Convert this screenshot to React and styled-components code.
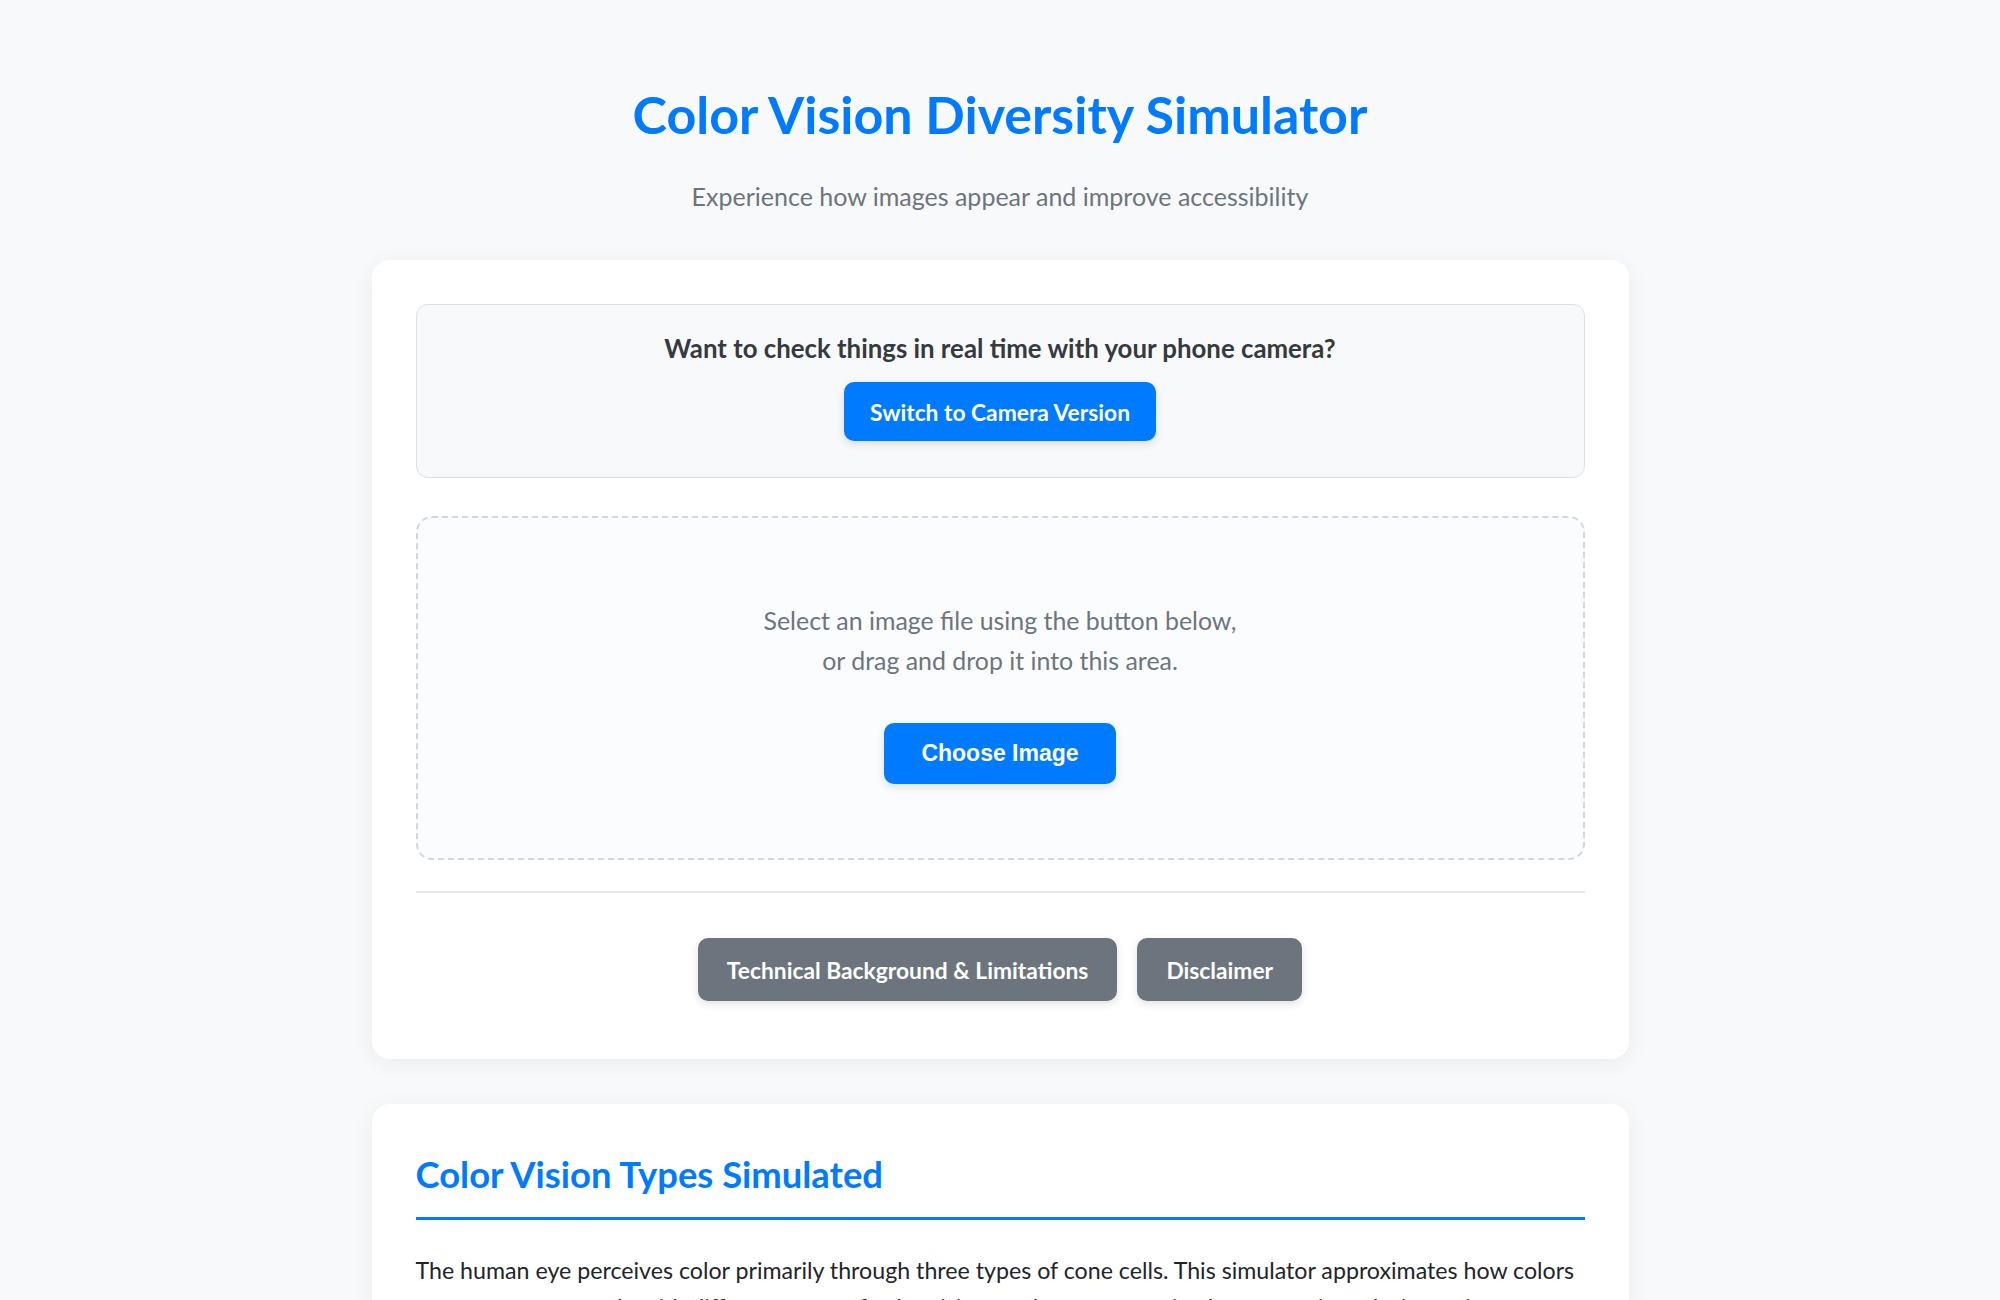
import styled, { createGlobalStyle } from "styled-components";

const GlobalStyle = createGlobalStyle`
	* {
		box-sizing: border-box;
	}
	body {
		margin: 0;
		background: #f8f9fa;
		font-family: "Lato", "Noto Sans", sans-serif;
		color: #212529;
	}
`;

const App = () => {
	return (
		<>
			<GlobalStyle />
			<Page>
				<Header>
					<Title>Color Vision Diversity Simulator</Title>
					<Subtitle>Experience how images appear and improve accessibility</Subtitle>
				</Header>

				<Card>
					<CameraBox>
						<CameraText>Want to check things in real time with your phone camera?</CameraText>
						<PrimaryButton>Switch to Camera Version</PrimaryButton>
					</CameraBox>

					<DropZone>
						<DropText>
							Select an image file using the button below,
							<br />
							or drag and drop it into this area.
						</DropText>
						<ChooseButton>Choose Image</ChooseButton>
					</DropZone>

					<Divider />

					<ButtonRow>
						<SecondaryButton>Technical Background &amp; Limitations</SecondaryButton>
						<SecondaryButton>Disclaimer</SecondaryButton>
					</ButtonRow>
				</Card>

				<Card>
					<SectionTitle>Color Vision Types Simulated</SectionTitle>
					<Paragraph>
						The human eye perceives color primarily through three types of cone cells. This simulator approximates how colors
						may appear to people with different types of color vision, such as protanopia, deuteranopia and tritanopia.
					</Paragraph>
				</Card>
			</Page>
		</>
	);
};

const Page = styled.div`
	width: 1257px;
	margin: 0 auto;
	padding: 83px 0 60px;
`;

const Header = styled.header`
	text-align: center;
	margin-bottom: 44px;
`;

const Title = styled.h1`
	margin: 0;
	font-size: 52px;
	line-height: 1.2;
	font-weight: 700;
	color: #007bff;
`;

const Subtitle = styled.p`
	margin: 33px 0 0;
	font-size: 25px;
	line-height: 1.5;
	color: #6c757d;
`;

const Card = styled.section`
	background: #fff;
	border-radius: 18px;
	padding: 44px 44px 58px;
	box-shadow: 0 4px 22px rgba(0, 0, 0, 0.06);
	margin-bottom: 45px;
`;

const CameraBox = styled.div`
	display: flex;
	flex-direction: column;
	align-items: center;
	background: #f8f9fa;
	border: 1px solid #dde1e5;
	border-radius: 12px;
	padding: 25px 20px 36px;
`;

const CameraText = styled.p`
	margin: 0 0 16px;
	font-size: 25.8px;
	line-height: 1.4;
	font-weight: 700;
	color: #343a40;
`;

const PrimaryButton = styled.button`
	height: 59px;
	padding: 0 26px;
	border: none;
	border-radius: 10px;
	background: #007bff;
	color: #fff;
	font-family: "Lato", "Noto Sans", sans-serif;
	font-size: 22.8px;
	font-weight: 700;
	box-shadow: 0 3px 8px rgba(0, 0, 0, 0.12);
	cursor: pointer;
`;

const DropZone = styled.div`
	display: flex;
	flex-direction: column;
	align-items: center;
	margin-top: 38px;
	padding: 82px 20px 74px;
	border: 2px dashed #d3d7db;
	border-radius: 16px;
	background: #fbfcfd;
`;

const DropText = styled.p`
	margin: 0 0 43px;
	font-size: 24.9px;
	line-height: 40px;
	text-align: center;
	color: #6c757d;
`;

const ChooseButton = styled.button`
	width: 232px;
	height: 61px;
	border: none;
	border-radius: 10px;
	background: #007bff;
	color: #fff;
	font-family: "Liberation Sans", Arial, sans-serif;
	font-size: 23px;
	font-weight: 700;
	box-shadow: 0 3px 8px rgba(0, 0, 0, 0.12);
	cursor: pointer;
`;

const Divider = styled.div`
	height: 2px;
	margin-top: 31px;
	background: #e6e8ea;
`;

const ButtonRow = styled.div`
	display: flex;
	justify-content: center;
	gap: 20px;
	margin-top: 45px;
`;

const SecondaryButton = styled.button`
	height: 63px;
	padding: 0 29px;
	border: none;
	border-radius: 10px;
	background: #6c757d;
	color: #fff;
	font-family: "Lato", "Noto Sans", sans-serif;
	font-size: 22.8px;
	font-weight: 700;
	box-shadow: 0 3px 8px rgba(0, 0, 0, 0.12);
	cursor: pointer;
`;

const SectionTitle = styled.h2`
	margin: 5px 0 0;
	padding-bottom: 20px;
	border-bottom: 3px solid #007bff;
	font-size: 36.4px;
	line-height: 1.2;
	font-weight: 700;
	color: #007bff;
`;

const Paragraph = styled.p`
	margin: 32px 0 0;
	font-size: 23.2px;
	line-height: 1.6;
	color: #212529;
`;

export default App;
